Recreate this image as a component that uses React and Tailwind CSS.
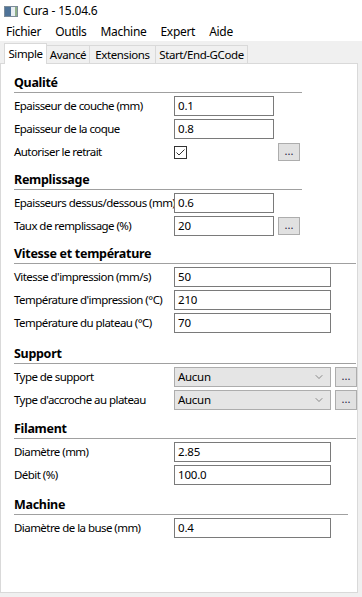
import { ChevronDown } from "lucide-react";

const font = "font-['Noto_Sans',sans-serif]";

const Field = ({ value, wide }) => (
  <div
    className={`h-[20px] border border-[#7a7a7a] bg-white px-[3px] text-[11.5px] leading-[18px] tracking-[-0.2px] text-black ${
      wide ? "w-[157px]" : "w-[100px]"
    }`}
  >
    {value}
  </div>
);

const Dots = ({ h = "h-[18px]" }) => (
  <div
    className={`flex w-[22px] ${h} items-center justify-center border border-[#adadad] bg-[#e1e1e1] text-[11px] leading-none text-[#1a1a40]`}
  >
    <span className="-mt-[4px]">...</span>
  </div>
);

const Select = ({ value }) => (
  <div className="flex h-[20px] w-[157px] items-center justify-between border border-[#adadad] bg-[#e5e5e5] px-[3px] text-[11.5px] leading-[18px] tracking-[-0.3px]">
    <span>{value}</span>
    <ChevronDown size={12} strokeWidth={1.3} className="mr-[2px] text-[#555]" />
  </div>
);

const Row = ({ label, children }) => (
  <div className="mt-[3px] flex h-[20px] items-center">
    <div className="w-[160px] shrink-0 whitespace-nowrap text-[11.5px] tracking-[-0.55px] text-black">{label}</div>
    <div className="flex items-center gap-[4px]">{children}</div>
  </div>
);

const Section = ({ title, mt, line, children }) => (
  <div style={{ marginTop: mt }}>
    <div
      className="h-[21px] border-b border-[#a0a0a0] pt-[2px] text-[12.5px] font-bold leading-[18px] tracking-[-0.3px] text-black"
      style={{ width: line }}
    >
      {title}
    </div>
    <div>{children}</div>
  </div>
);

const Check = () => (
  <svg width="13" height="13" viewBox="0 0 13 13">
    <rect x="0.5" y="0.5" width="12" height="12" fill="white" stroke="#333" />
    <path d="M2.5 6.5 L5 9 L10.5 3.5" fill="none" stroke="#333" strokeWidth="1" />
  </svg>
);

export default function App() {
  return (
    <div className={`h-[597px] w-[362px] overflow-hidden bg-[#f0f0f0] ${font} text-black`}>
      {/* title bar */}
      <div className="flex h-[22px] items-center bg-white pl-[4px]">
        <svg width="14" height="11" viewBox="0 0 14 11" className="mt-[1px]">
          <rect x="0" y="0" width="14" height="11" fill="#7d8c99" />
          <rect x="1" y="1" width="6" height="9" fill="#4f7398" />
          <rect x="7" y="1" width="4" height="9" fill="#e8eef2" />
          <rect x="11" y="1" width="2" height="9" fill="#8fb08a" />
        </svg>
        <span className="ml-[5px] text-[12px] leading-none tracking-[-0.2px]">Cura - 15.04.6</span>
      </div>
      {/* menu bar */}
      <div className="flex h-[19px] items-center gap-[14px] bg-white pl-[6px] text-[12px] tracking-[-0.3px]">
        <span>Fichier</span>
        <span>Outils</span>
        <span>Machine</span>
        <span>Expert</span>
        <span>Aide</span>
      </div>
      {/* tabs */}
      <div className="flex h-[22px] items-end whitespace-nowrap pl-[4px] pt-[2px] text-[11.5px] tracking-[-0.4px]">
        <div className="relative z-10 -mb-[1px] flex h-[21px] w-[43px] items-start justify-center border border-b-0 border-[#d9d9d9] bg-white pt-[1px]">
          Simple
        </div>
        <div className="flex h-[18px] w-[43px] items-center justify-center border border-l-0 border-b-0 border-[#d9d9d9]">
          Avancé
        </div>
        <div className="flex h-[18px] w-[66px] items-center justify-center border border-l-0 border-b-0 border-[#d9d9d9]">
          Extensions
        </div>
        <div className="flex h-[18px] w-[92px] items-center justify-center border border-l-0 border-b-0 border-[#d9d9d9]">
          Start/End-GCode
        </div>
      </div>
      {/* panel */}
      <div className="h-[530px] w-[358px] border border-[#d9d9d9] bg-white pl-[13px] pt-[8px]">
        <Section title="Qualité" mt={0} line={288}>
          <Row label="Epaisseur de couche (mm)">
            <Field value="0.1" />
          </Row>
          <Row label="Epaisseur de la coque">
            <Field value="0.8" />
          </Row>
          <Row label="Autoriser le retrait">
            <div className="w-[100px]">
              <Check />
            </div>
            <Dots />
          </Row>
        </Section>
        <Section title="Remplissage" mt={7} line={288}>
          <Row label="Epaisseurs dessus/dessous (mm)">
            <Field value="0.6" />
          </Row>
          <Row label="Taux de remplissage (%)">
            <Field value="20" />
            <Dots />
          </Row>
        </Section>
        <Section title="Vitesse et température" mt={7} line={342}>
          <Row label="Vitesse d'impression (mm/s)">
            <Field value="50" wide />
          </Row>
          <Row label="Température d'impression (°C)">
            <Field value="210" wide />
          </Row>
          <Row label="Température du plateau (°C)">
            <Field value="70" wide />
          </Row>
        </Section>
        <Section title="Support" mt={10} line={342}>
          <Row label="Type de support">
            <Select value="Aucun" />
            <Dots h="h-[20px]" />
          </Row>
          <Row label="Type d'accroche au plateau">
            <Select value="Aucun" />
            <Dots h="h-[20px]" />
          </Row>
        </Section>
        <Section title="Filament" mt={8} line={342}>
          <Row label="Diamètre (mm)">
            <Field value="2.85" wide />
          </Row>
          <Row label="Débit (%)">
            <Field value="100.0" wide />
          </Row>
        </Section>
        <Section title="Machine" mt={9} line={334}>
          <Row label="Diamètre de la buse (mm)">
            <Field value="0.4" wide />
          </Row>
        </Section>
      </div>
    </div>
  );
}
